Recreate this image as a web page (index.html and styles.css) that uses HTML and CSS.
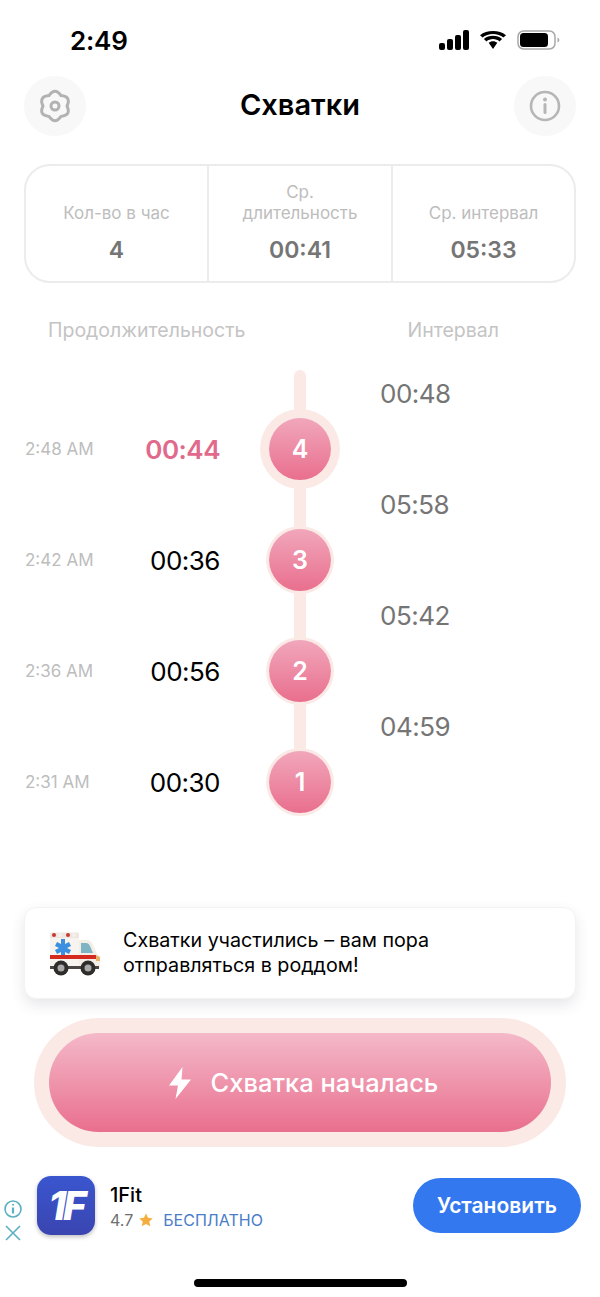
FILE: index.html
```html
<!DOCTYPE html>
<html lang="ru">
<head>
  <meta charset="UTF-8" />
  <title>Схватки</title>
  <meta name="viewport" content="width=device-width, initial-scale=1" />
  <link rel="stylesheet" href="styles.css">
</head>
<body>

<div class="status-bar">
  <span class="clock">2:49</span>
  <div class="status-icons">
    <svg width="30" height="20" viewBox="0 0 30 20"><rect x="0" y="13" width="6" height="7" rx="2"/><rect x="8" y="9" width="6" height="11" rx="2"/><rect x="16" y="5" width="6" height="15" rx="2"/><rect x="24" y="0" width="6" height="20" rx="2"/></svg>
    <svg width="28" height="18" viewBox="0 0 28 20" preserveAspectRatio="none"><path d="M14 3.200c4 0 7.600 1.500 10.400 4.100L27 4.600C23.500 1.300 19 0 14 0S4.500 1.300 1 4.600l2.600 2.700C6.400 4.700 10 3.200 14 3.200z"/><path d="M14 9c2.500 0 4.800 1 6.500 2.600l2.600-2.700C20.700 6.700 17.500 5.400 14 5.400S7.300 6.700 4.900 8.900l2.600 2.700C9.200 10 11.500 9 14 9z"/><path d="M14 11.400c-1.700 0-3.200.7-4.300 1.700L14 20l4.300-6.900c-1.100-1-2.600-1.700-4.300-1.700z"/></svg>
    <svg width="43" height="20" viewBox="0 0 43 20"><rect x="1" y="1" width="37" height="18" rx="5.500" fill="none" stroke="#a8a8a8" stroke-width="1.500"/><rect x="3" y="3" width="28" height="14" rx="3.500"/><path d="M40.500 7.500c1.200.4 1.800 1.300 1.800 2.500s-.6 2.100-1.800 2.500z" fill="#a8a8a8"/></svg>
  </div>
</div>

<header class="top">
  <div class="round-btn">
    <svg width="36" height="38" viewBox="-3 -3 36 38" fill="none" stroke="#b2b2b2" stroke-width="3" stroke-linejoin="round"><path d="M21 5.600Q31.500 6.500 27 16Q31.500 25.500 21 26.400Q15 35 9 26.400Q-1.500 25.500 3 16Q-1.500 6.500 9 5.600Q15 -3 21 5.600z"/><circle cx="15" cy="16" r="4"/></svg>
  </div>
  <h1>Схватки</h1>
  <div class="round-btn">
    <svg width="32" height="32" viewBox="0 0 32 32" fill="none" stroke="#b6b6b6" stroke-width="2.600"><circle cx="16" cy="16" r="14"/><path d="M16 14.500v8" stroke-width="3" stroke-linecap="round"/><circle cx="16" cy="9.500" r="1" stroke-width="2"/></svg>
  </div>
</header>

<section class="stats">
  <div class="stat">
    <div class="stat-label">Кол-во в час</div>
    <div class="stat-value">4</div>
  </div>
  <div class="stat">
    <div class="stat-label">Ср.<br>длительность</div>
    <div class="stat-value">00:41</div>
  </div>
  <div class="stat">
    <div class="stat-label">Ср. интервал</div>
    <div class="stat-value">05:33</div>
  </div>
</section>

<div class="col-titles">
  <span>Продолжительность</span>
  <span>Интервал</span>
</div>

<section class="timeline">
  <div class="row"><span class="interval">00:48</span></div>
  <div class="row">
    <span class="time">2:48 AM</span>
    <span class="duration current">00:44</span>
    <span class="dot dot-current">4</span>
  </div>
  <div class="row"><span class="interval">05:58</span></div>
  <div class="row">
    <span class="time">2:42 AM</span>
    <span class="duration">00:36</span>
    <span class="dot">3</span>
  </div>
  <div class="row"><span class="interval">05:42</span></div>
  <div class="row">
    <span class="time">2:36 AM</span>
    <span class="duration">00:56</span>
    <span class="dot">2</span>
  </div>
  <div class="row"><span class="interval">04:59</span></div>
  <div class="row">
    <span class="time">2:31 AM</span>
    <span class="duration">00:30</span>
    <span class="dot">1</span>
  </div>
</section>

<div class="notice">
  <svg class="ambulance" width="52" height="46" viewBox="0 0 52 46">
    <path d="M4 2h25c1 0 2 1 2 2v34H2V4c0-1 1-2 2-2z" fill="#f7f3ee"/>
    <path d="M2 3h29v5H2z" fill="#eee6e0"/>
    <circle cx="6" cy="5" r="2" fill="#c43a30"/><circle cx="12" cy="5" r="2" fill="#f4f0ec"/><circle cx="20" cy="5" r="2" fill="#c43a30"/><circle cx="26" cy="5" r="2" fill="#f4f0ec"/>
    <path d="M31 10h8c3 0 5 2 6 5l4 9c2 1 3 3 3 6v8H31z" fill="#f5eee6"/>
    <path d="M33 13h5c2 0 3 1 4 3l3 7H33z" fill="#7fb4c4"/>
    <path d="M17 10h-4v5l-4-2-2 4 4 2-4 2 2 4 4-2v5h4v-5l4 2 2-4-4-2 4-2-2-4-4 2z" fill="#3d8fe0" transform="translate(0 -1)"/>
    <path d="M2 25h46v4H2z" fill="#d42a1f"/>
    <path d="M48 25l4 2v4h-4z" fill="#e9b26a"/>
    <path d="M2 36h49v3H2z" fill="#4a4644"/>
    <circle cx="13" cy="38" r="7.500" fill="#2f2d2c"/><circle cx="13" cy="38" r="3.500" fill="#a9a9a9"/>
    <circle cx="40" cy="38" r="7.500" fill="#2f2d2c"/><circle cx="40" cy="38" r="3.500" fill="#a9a9a9"/>
  </svg>
  <p>Схватки участились – вам пора<br>отправляться в роддом!</p>
</div>

<div class="main-btn-wrap">
  <button class="main-btn">
    <svg width="24" height="32" viewBox="0 0 24 32" fill="#fff"><path d="M14.500 0L1 18.500h9L7.500 32 23 12.500h-9.500z"/></svg>
    Схватка началась
  </button>
</div>

<div class="ad">
  <div class="ad-marks">
    <svg width="20" height="20" viewBox="0 0 20 20" fill="none" stroke="#5cb0c4" stroke-width="1.600"><circle cx="10" cy="10" r="8"/><path d="M10 8.500v6" stroke-width="2.200"/><circle cx="10" cy="5.800" r="1" fill="#5cb0c4" stroke="none"/></svg>
    <svg width="18" height="18" viewBox="0 0 18 18" fill="none" stroke="#5cb0c4" stroke-width="1.600"><path d="M2 2l14 14M16 2L2 16"/></svg>
  </div>
  <div class="ad-logo">1F</div>
  <div class="ad-text">
    <div class="ad-name">1Fit</div>
    <div class="ad-meta">
      <span>4.7</span>
      <svg width="14" height="14" viewBox="0 0 14 14" fill="#f5ad3d"><path d="M7 .5l2 4.300 4.700.6-3.400 3.200.9 4.700L7 11l-4.200 2.300.9-4.700L.3 5.400 5 4.800z"/></svg>
      <span class="ad-free">БЕСПЛАТНО</span>
    </div>
  </div>
  <button class="ad-btn">Установить</button>
</div>

<div class="home-bar"></div>

</body>
</html>
```

FILE: styles.css
```css
body {
  font-family: Inter, 'Liberation Sans', sans-serif;
  background: #fff;
  color: #000;
  margin: 0;
  padding: 0;
  width: 600px;
  height: 1297px;
  overflow: hidden;
}

.status-bar {
  height: 76px;
  display: flex;
  justify-content: space-between;
  align-items: center;
  padding: 4px 40px 0 70px;
  box-sizing: border-box;
}

.clock {
  font-size: 26px;
  font-weight: 600;
  letter-spacing: -0.2px;
}

.status-icons {
  display: flex;
  align-items: center;
  gap: 10px;
}

.top {
  height: 60px;
  margin: 0 24px;
  display: flex;
  justify-content: space-between;
  align-items: center;
}

.top h1 {
  margin: -4px 0 0;
  font-size: 29px;
  font-weight: 600;
}

.round-btn {
  width: 62px;
  height: 60px;
  border-radius: 50%;
  background: #f8f8f8;
  display: flex;
  align-items: center;
  justify-content: center;
}

.stats {
  margin: 28px 24px 0;
  height: 119px;
  box-sizing: border-box;
  border: 2px solid #ececec;
  border-radius: 26px;
  display: grid;
  grid-template-columns: 181px 184px 1fr;
}

.stat {
  display: flex;
  flex-direction: column;
  justify-content: flex-end;
  align-items: center;
  text-align: center;
  padding-bottom: 17px;
}

.stat + .stat {
  border-left: 2px solid #ececec;
}

.stat-label {
  font-size: 17px;
  line-height: 21px;
  color: #bdbdbd;
  margin-bottom: 12px;
}

.stat-value {
  font-size: 23px;
  font-weight: 600;
  line-height: 28px;
  color: #757575;
}

.col-titles {
  margin-top: 36px;
  height: 22px;
  line-height: 22px;
  font-size: 19.500px;
  color: #c4c4c4;
  display: flex;
  justify-content: space-between;
  padding: 0 101px 0 48px;
}

.timeline {
  position: relative;
  margin-top: 25px;
  height: 444px;
}

.timeline::before {
  content: "";
  position: absolute;
  left: 294px;
  top: 4px;
  width: 12px;
  height: 412px;
  border-radius: 6px;
  background: #fbe9e6;
}

.row {
  position: relative;
  height: 55.500px;
  padding-left: 25px;
  display: grid;
  grid-template-columns: 100px 95px 160px 1fr;
  grid-template-rows: 55.500px;
  align-items: center;
}

.time {
  font-size: 17px;
  color: #bdbdbd;
}

.duration {
  font-size: 26px;
  letter-spacing: -0.5px;
  text-align: right;
}

.duration.current {
  font-weight: 600;
  color: #e0698c;
}

.dot {
  justify-self: center;
  width: 62px;
  height: 62px;
  margin: -4px 0;
  border-radius: 50%;
  background: linear-gradient(#f1a7bb, #e96f8e);
  box-shadow: 0 0 0 3px #fbe9e6;
  color: #fff;
  font-size: 25px;
  font-weight: 600;
  display: flex;
  align-items: center;
  justify-content: center;
}

.dot-current {
  box-shadow: 0 0 0 9px #fbe9e6;
}

.interval {
  grid-column: 4;
  font-size: 26px;
  letter-spacing: -0.5px;
  color: #757575;
}

.notice {
  margin: 97px 24px 0;
  height: 92px;
  box-sizing: border-box;
  background: #fff;
  border-radius: 12px;
  border: 1px solid #f3f3f3;
  box-shadow: 0 6px 14px rgba(60, 60, 80, 0.12);
  display: flex;
  align-items: center;
  padding-left: 23px;
}

.ambulance {
  margin-right: 23px;
}

.notice p {
  margin: 0;
  font-size: 19.700px;
  line-height: 25px;
}

.main-btn-wrap {
  margin: 19px 34px 0;
  height: 129px;
  box-sizing: border-box;
  padding: 15px;
  border-radius: 65px;
  background: #fbe9e6;
}

.main-btn {
  width: 100%;
  height: 99px;
  padding: 0 0 0 6px;
  border: none;
  border-radius: 50px;
  background: linear-gradient(#f4b9c9, #e96f8e);
  color: #fff;
  font-family: inherit;
  font-size: 25.500px;
  font-weight: 500;
  display: flex;
  align-items: center;
  justify-content: center;
  gap: 19px;
}

.ad {
  margin-top: 28px;
  height: 60px;
  display: flex;
  align-items: center;
}

.ad-marks {
  width: 26px;
  padding-top: 30px;
  margin-right: 11px;
  display: flex;
  flex-direction: column;
  align-items: center;
  gap: 5px;
}

.ad-logo {
  width: 58px;
  height: 59px;
  border-radius: 14px;
  background: linear-gradient(#3a56cf, #3a45b0);
  box-shadow: 0 2px 4px rgba(0, 0, 0, 0.25);
  color: #fff;
  font-size: 40px;
  font-weight: 800;
  font-style: italic;
  letter-spacing: -3px;
  display: flex;
  align-items: center;
  justify-content: center;
}

.ad-text {
  margin-left: 15px;
  flex: 1;
}

.ad-name {
  font-size: 20px;
  font-weight: 500;
  line-height: 26px;
  margin-top: 4px;
}

.ad-meta {
  display: flex;
  align-items: center;
  gap: 6px;
  font-size: 16px;
  color: #6f6f6f;
  line-height: 24px;
}

.ad-free {
  color: #4a7cc9;
  margin-left: 4px;
}

.ad-btn {
  width: 168px;
  height: 55px;
  margin-right: 19px;
  border: none;
  border-radius: 28px;
  background: #3478f0;
  color: #fff;
  font-family: inherit;
  font-size: 21px;
  font-weight: 600;
}

.home-bar {
  width: 213px;
  height: 8px;
  margin: 44px auto 0;
  border-radius: 4px;
  background: #000;
}
```
